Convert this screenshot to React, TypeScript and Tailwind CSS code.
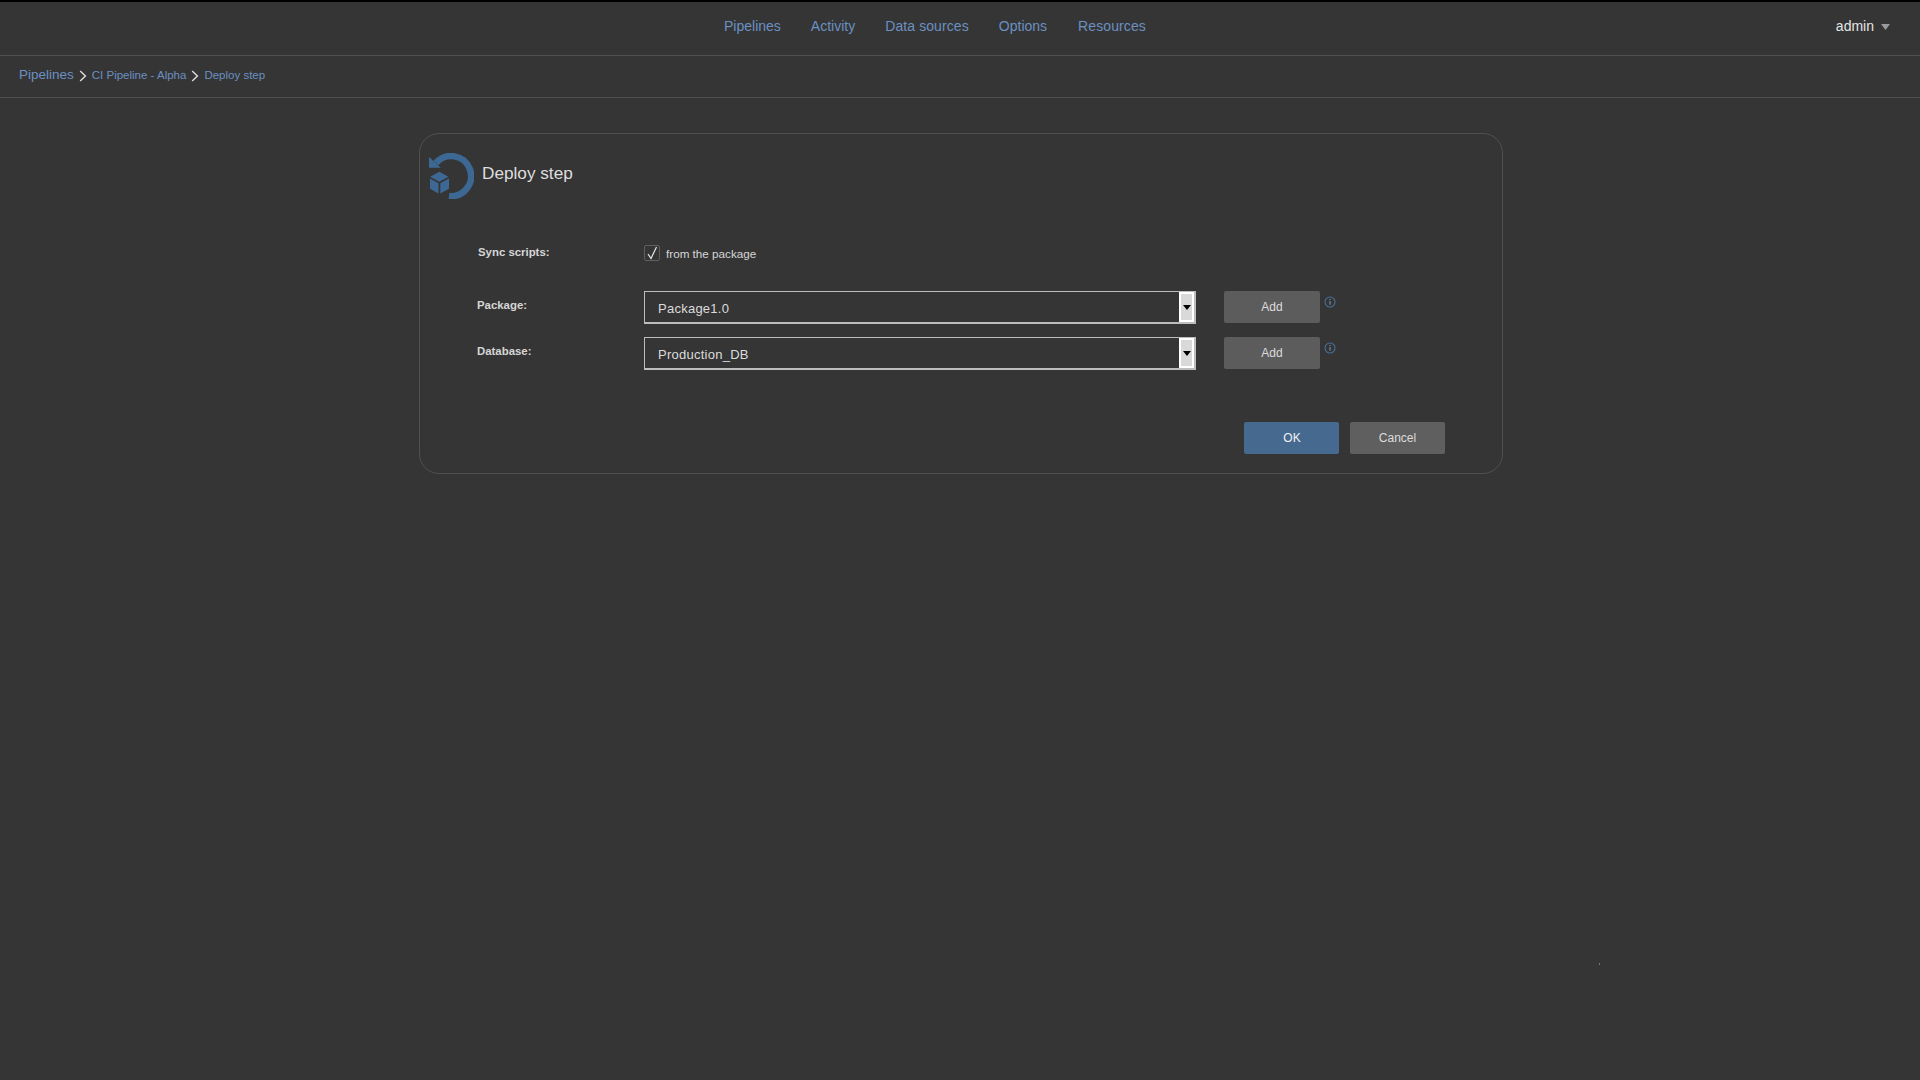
import React from "react";

function DeployIcon() {
  return (
    <svg width="46" height="46" viewBox="0 0 46 46" className="shrink-0">
      <path d="M21 43 A20 20 0 1 0 8 10" fill="none" stroke="#3d6894" strokeWidth="6.5" />
      <polygon points="1,3.7 1,14.7 12.7,14.7" fill="#3d6894" />
      <polygon points="11.3,18.7 20.5,23.7 11.3,28.7 2.1,23.7" fill="#3d6894" />
      <polygon points="2,25.5 10.5,30.2 10.5,40.5 2,35.8" fill="#3d6894" />
      <polygon points="21,25.5 12.3,30.2 12.3,40.5 21,35.8" fill="#3d6894" />
    </svg>
  );
}

function Chevron() {
  return (
    <svg width="8" height="12" viewBox="0 0 8 12" className="shrink-0">
      <path d="M1.2 1 L6.4 6 L1.2 11" fill="none" stroke="#d8d8d8" strokeWidth="1.5" />
    </svg>
  );
}

function InfoIcon() {
  return (
    <svg width="12" height="12" viewBox="0 0 12 12" className="shrink-0">
      <circle cx="6" cy="6" r="5" fill="none" stroke="#44709e" strokeWidth="1.1" />
      <rect x="5.5" y="5" width="1" height="3.6" fill="#7f9dc4" />
      <rect x="5.5" y="3" width="1" height="1" fill="#7f9dc4" />
    </svg>
  );
}

function SelectBox({ value }: { value: string }) {
  return (
    <div className="flex h-[33px] w-[552px] border border-[#bdbdbd] border-b-2 border-r-2 bg-[#353535]">
      <div className="flex flex-1 items-center pl-[13px] pt-[4px] text-[13px] tracking-[0.25px] text-[#dcdcdc]">{value}</div>
      <div className="flex w-[15px] items-center justify-center border-2 border-[#ffffff] bg-[#d9d9d9]">
        <svg width="8" height="5" viewBox="0 0 8 5">
          <polygon points="0,0 8,0 4,5" fill="#000" />
        </svg>
      </div>
    </div>
  );
}

function Row({ label, value, top }: { label: string; value: string; top: string }) {
  return (
    <div className={`flex h-[33px] items-start ${top}`}>
      <div className="w-[167px] pt-[6px] text-[11.4px] font-bold text-[#d6d6d6]">{label}</div>
      <SelectBox value={value} />
      <button className="ml-[28px] h-[32px] w-[96px] rounded-[2px] bg-[#5c5c5c] text-[12px] text-[#dcdcdc]">Add</button>
      <div className="ml-[4px] mt-[5px]">
        <InfoIcon />
      </div>
    </div>
  );
}

export default function App() {
  return (
    <div
      className="relative flex min-h-[1080px] flex-col border-t-2 border-[#000000] bg-[#353535]"
      style={{ fontFamily: '"Liberation Sans", Arial, sans-serif' }}
    >
      <header className="flex h-[54px] items-center justify-between border-b border-[#505050] pb-[4px] pl-[724px] pr-[30px]">
        <nav className="flex gap-[30px] text-[14px] text-[#6b90c2]">
          <a>Pipelines</a>
          <a>Activity</a>
          <a className="tracking-[0.1px]">Data sources</a>
          <a>Options</a>
          <a className="ml-[1px] tracking-[0.1px]">Resources</a>
        </nav>
        <div className="flex items-center gap-[7px] text-[14px] text-[#e4e4e4]">
          <span>admin</span>
          <svg width="9" height="6" viewBox="0 0 9 6">
            <polygon points="0,0 9,0 4.5,6" fill="#9a9a9a" />
          </svg>
        </div>
      </header>

      <div className="flex h-[42px] items-center gap-[5px] border-b border-[#505050] pb-[2px] pl-[19px] text-[#6b90c2]">
        <a className="text-[13.5px]">Pipelines</a>
        <Chevron />
        <a className="text-[11.5px]">CI Pipeline - Alpha</a>
        <Chevron />
        <a className="text-[11.5px]">Deploy step</a>
      </div>

      <main className="px-[419px] pt-[35px]">
        <section className="h-[341px] w-[1084px] rounded-[20px] border border-[#505050] pl-[57px] pr-[57px]">
          <div className="-ml-[49px] flex items-start pt-[19px]">
            <DeployIcon />
            <h1 className="ml-[8px] mt-[8px] text-[17.2px] font-normal text-[#dedede]">Deploy step</h1>
          </div>

          <div className="mt-[46px] flex h-[16px] items-center">
            <div className="w-[167px] pl-[1px] text-[11.4px] font-bold text-[#d6d6d6]">Sync scripts:</div>
            <div className="flex h-[16px] w-[16px] items-center justify-center rounded-[2px] border border-[#5f5f5f]">
              <svg width="12" height="14" viewBox="0 0 12 14">
                <path d="M2 8 L5 12.5 L10.5 1" fill="none" stroke="#e6e6e6" strokeWidth="1.2" />
              </svg>
            </div>
            <span className="ml-[6px] mt-[2px] text-[11.7px] text-[#d6d6d6]">from the package</span>
          </div>

          <Row label="Package:" value="Package1.0" top="mt-[30px]" />
          <Row label="Database:" value="Production_DB" top="mt-[13px]" />

          <div className="mt-[52px] flex justify-end gap-[11px]">
            <button className="h-[32px] w-[95px] rounded-[2px] bg-[#46698f] pl-[1px] text-[12px] text-[#f2f2f2]">OK</button>
            <button className="h-[32px] w-[95px] rounded-[2px] bg-[#5f5f5f] text-[12px] text-[#dcdcdc]">Cancel</button>
          </div>
        </section>
      </main>

      <div className="absolute left-[1599px] top-[961px] h-[2px] w-[1px] bg-[#777777]" />
    </div>
  );
}
